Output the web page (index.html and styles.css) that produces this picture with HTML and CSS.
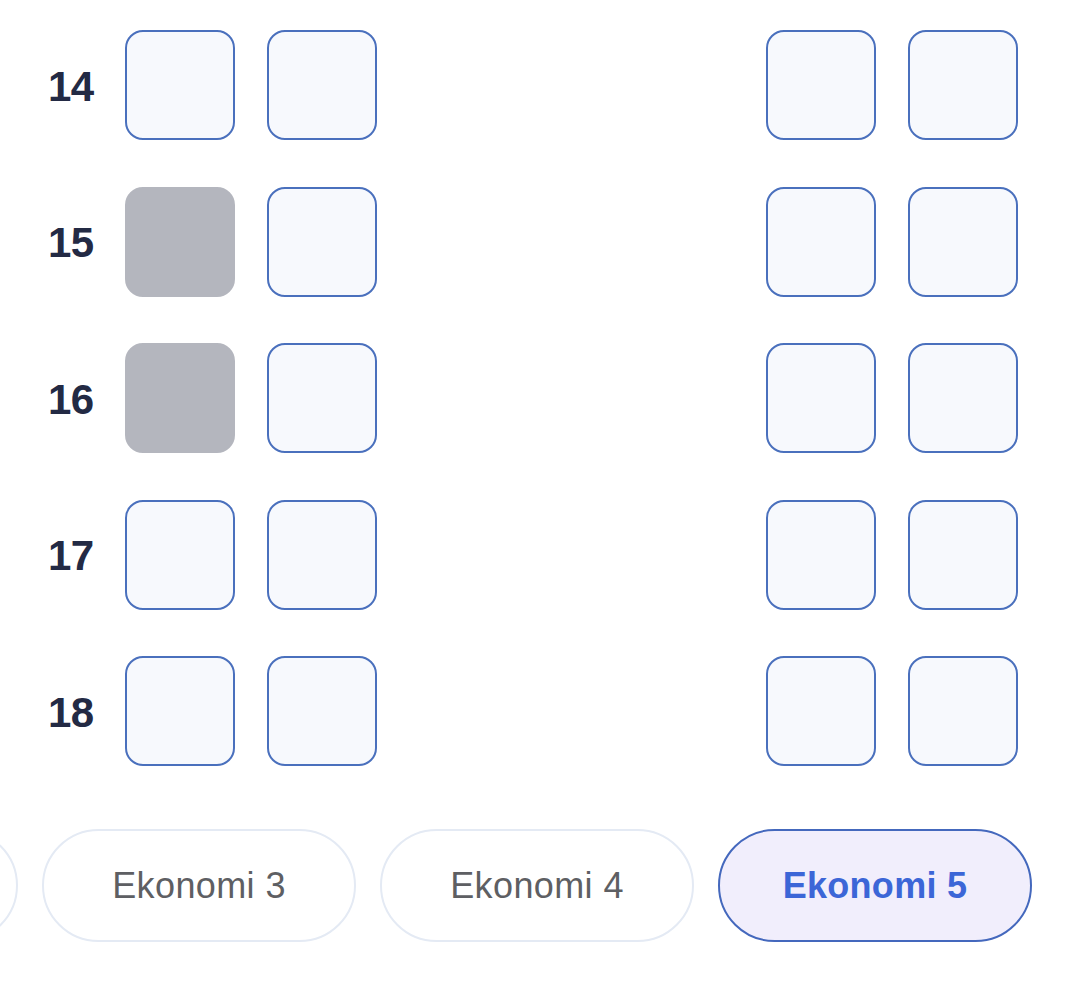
FILE: index.html
```html
<!DOCTYPE html>
<html lang="id">
<head>
<meta charset="utf-8">
<link rel="stylesheet" href="styles.css">
</head>
<body>
<div class="page">
  <div class="rows">
    <div class="row"><span class="label">14</span><div class="seat"></div><div class="seat"></div><div class="aisle"></div><div class="seat"></div><div class="seat"></div></div>
    <div class="row"><span class="label">15</span><div class="seat taken"></div><div class="seat"></div><div class="aisle"></div><div class="seat"></div><div class="seat"></div></div>
    <div class="row"><span class="label">16</span><div class="seat taken"></div><div class="seat"></div><div class="aisle"></div><div class="seat"></div><div class="seat"></div></div>
    <div class="row"><span class="label">17</span><div class="seat"></div><div class="seat"></div><div class="aisle"></div><div class="seat"></div><div class="seat"></div></div>
    <div class="row"><span class="label">18</span><div class="seat"></div><div class="seat"></div><div class="aisle"></div><div class="seat"></div><div class="seat"></div></div>
  </div>
  <div class="tabs">
    <div class="tab" aria-hidden="true"></div>
    <div class="tab">Ekonomi 3</div>
    <div class="tab">Ekonomi 4</div>
    <div class="tab active">Ekonomi 5</div>
  </div>
</div>
</body>
</html>
```
FILE: styles.css
```css
html, body {
  margin: 0;
  padding: 0;
  background: #ffffff;
}
body {
  font-family: "Liberation Sans", Arial, sans-serif;
  width: 1079px;
  height: 990px;
  overflow: hidden;
}
.page {
  padding-top: 30px;
}
.rows {
  display: flex;
  flex-direction: column;
  gap: 46.5px;
  padding-left: 48px;
  padding-right: 61px;
}
.row {
  display: flex;
  align-items: center;
  gap: 32px;
}
.label {
  width: 45px;
  font-size: 42px;
  font-weight: 700;
  color: #232a44;
  letter-spacing: -0.5px;
  padding-top: 3px;
}
.seat {
  width: 110px;
  height: 110px;
  box-sizing: border-box;
  border: 2px solid #4a70bd;
  border-radius: 18px;
  background: #f7f9fd;
  flex: none;
}
.seat.taken {
  border-color: #b4b6be;
  background: #b4b6be;
}
.aisle {
  flex: 1;
}
.tabs {
  display: flex;
  gap: 24px;
  margin-top: 63px;
  margin-left: -296px;
}
.tab {
  flex: none;
  width: 314px;
  height: 113px;
  box-sizing: border-box;
  border: 2px solid #e4eaf4;
  border-radius: 57px;
  display: flex;
  align-items: center;
  justify-content: center;
  font-size: 36px;
  color: #5e5f63;
  letter-spacing: 0.4px;
  background: #ffffff;
}
.tab.active {
  border-color: #4468bd;
  background: #f1eefc;
  color: #3c66d7;
  font-weight: 700;
  letter-spacing: 0.3px;
}
```
